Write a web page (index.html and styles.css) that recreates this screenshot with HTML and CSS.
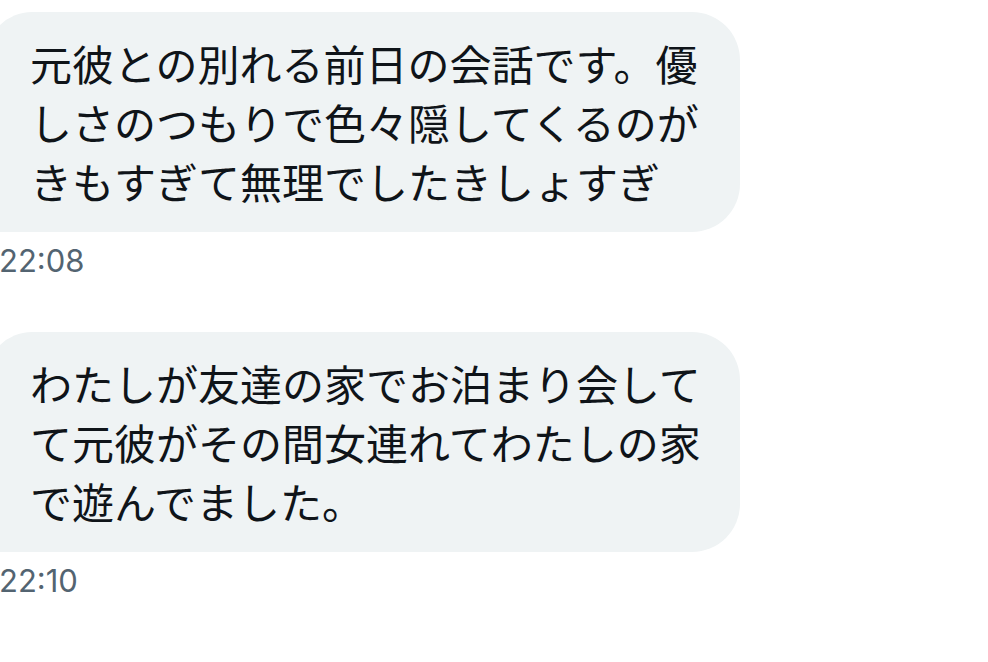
FILE: index.html
```html
<!DOCTYPE html>
<html lang="ja">
<head>
<meta charset="utf-8">
<title>DM</title>
<link rel="stylesheet" href="styles.css">
</head>
<body>
<div class="thread">
  <div class="msg">
    <div class="bubble"><p class="text">元彼との別れる前日の会話です。優しさのつもりで色々隠してくるのがきもすぎて無理でしたきしょすぎ</p></div>
    <div class="time">22:08</div>
  </div>
  <div class="msg">
    <div class="bubble"><p class="text">わたしが友達の家でお泊まり会してて元彼がその間女連れてわたしの家で遊んでました。</p></div>
    <div class="time">22:10</div>
  </div>
</div>
</body>
</html>
```
FILE: styles.css
```css
html, body {
  margin: 0;
  padding: 0;
  background: #ffffff;
  overflow: hidden;
}

.thread {
  display: flex;
  flex-direction: column;
  gap: 51px;
  padding-top: 12px;
}

.msg {
  display: flex;
  flex-direction: column;
  align-items: flex-start;
}

.bubble {
  margin-left: -14px;
  width: 754px;
  box-sizing: border-box;
  padding: 21px 36px 22px 44px;
  background: #eff3f4;
  border-radius: 46px 48px 48px 0;
}

.text {
  margin: 0;
  width: 674px;
  font-family: "Noto Sans CJK JP", "Noto Sans", sans-serif;
  font-size: 42px;
  line-height: 59px;
  color: #0f1419;
  line-break: strict;
}

.time {
  margin-top: 9px;
  margin-left: -1px;
  font-family: Inter, "Liberation Sans", sans-serif;
  font-size: 31px;
  line-height: 40px;
  color: #536471;
}
```
